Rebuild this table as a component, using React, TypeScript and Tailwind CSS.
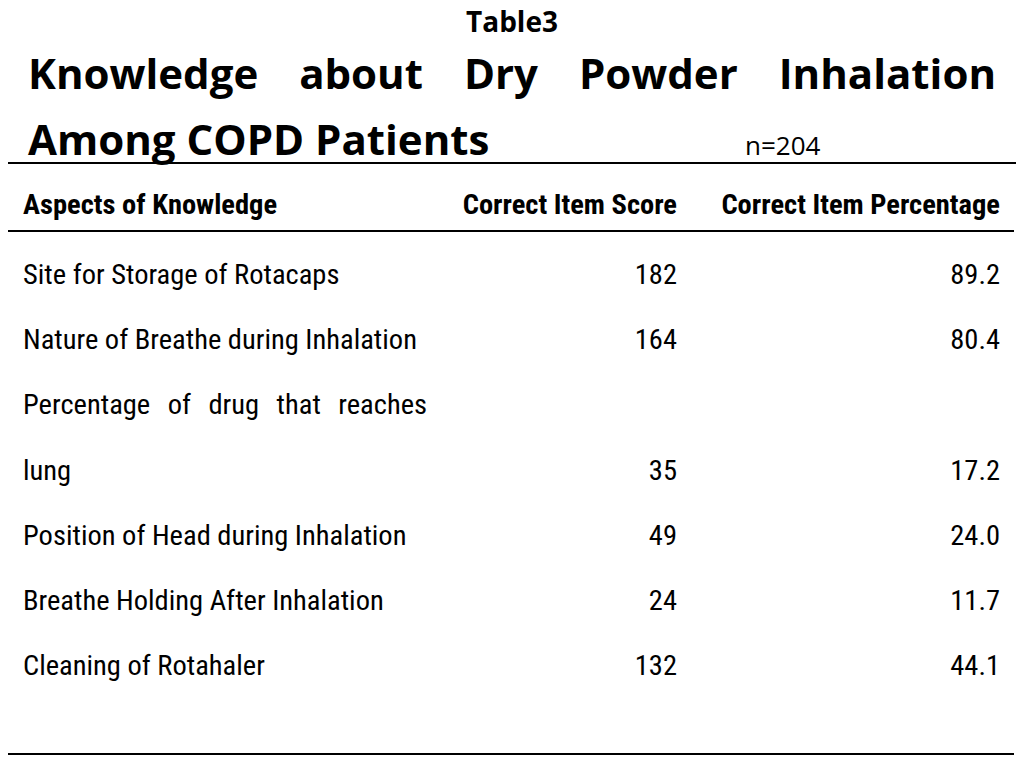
const rows = [
  { label: "Site for Storage of Rotacaps", score: "182", pct: "89.2" },
  { label: "Nature of Breathe during Inhalation", score: "164", pct: "80.4" },
  { label: "lung", lead: "Percentage of drug that reaches", score: "35", pct: "17.2" },
  { label: "Position of Head during Inhalation", score: "49", pct: "24.0" },
  { label: "Breathe Holding After Inhalation", score: "24", pct: "11.7" },
  { label: "Cleaning of Rotahaler", score: "132", pct: "44.1" },
];

const narrow = "font-['Roboto_Condensed','Lato','Liberation_Sans',sans-serif]";

export default function App() {
  return (
    <div className="w-[1024px] h-[768px] bg-white text-black overflow-hidden">
      {/* heading */}
      <div className="px-[8px] font-['Open_Sans','Liberation_Sans',sans-serif] font-bold">
        <div className="h-[39px] pt-[3px] text-center text-[28px] leading-[36px]">Table3</div>
        <div className="h-[68px] px-[20px] text-[42px] leading-[67px] text-justify [text-align-last:justify]">
          Knowledge about Dry Powder Inhalation
        </div>
        <div className="h-[57px] pt-[10px] flex items-baseline border-b-2 border-black leading-[44px]">
          <span className="w-[737px] pl-[20px] text-[42px] whitespace-nowrap">Among COPD Patients</span>
          <span className="font-normal text-[26px]">n=204</span>
        </div>
      </div>

      {/* table */}
      <div className={`mx-[8px] w-[1006px] ${narrow}`}>
        <div className="h-[68px] grid grid-cols-[423px_263px_320px] items-end pb-[9px] border-b-2 border-black font-bold text-[28.5px] leading-[32px] whitespace-nowrap">
          <div className="pl-[15px]">Aspects of Knowledge</div>
          <div className="text-right pr-[17px]">Correct Item Score</div>
          <div className="text-right pr-[14px]">Correct Item Percentage</div>
        </div>
        <div className="h-[523px] pt-[10px] border-b-2 border-black text-[28.5px] leading-[65.2px]">
          {rows.map((r) => (
            <div key={r.label} className="grid grid-cols-[423px_263px_320px] items-end">
              <div className="pl-[15px] pr-[4px]">
                {r.lead && <div className="text-justify [text-align-last:justify]">{r.lead}</div>}
                <div className="whitespace-nowrap">{r.label}</div>
              </div>
              <div className="text-right pr-[17px]">{r.score}</div>
              <div className="text-right pr-[14px]">{r.pct}</div>
            </div>
          ))}
        </div>
      </div>
    </div>
  );
}
